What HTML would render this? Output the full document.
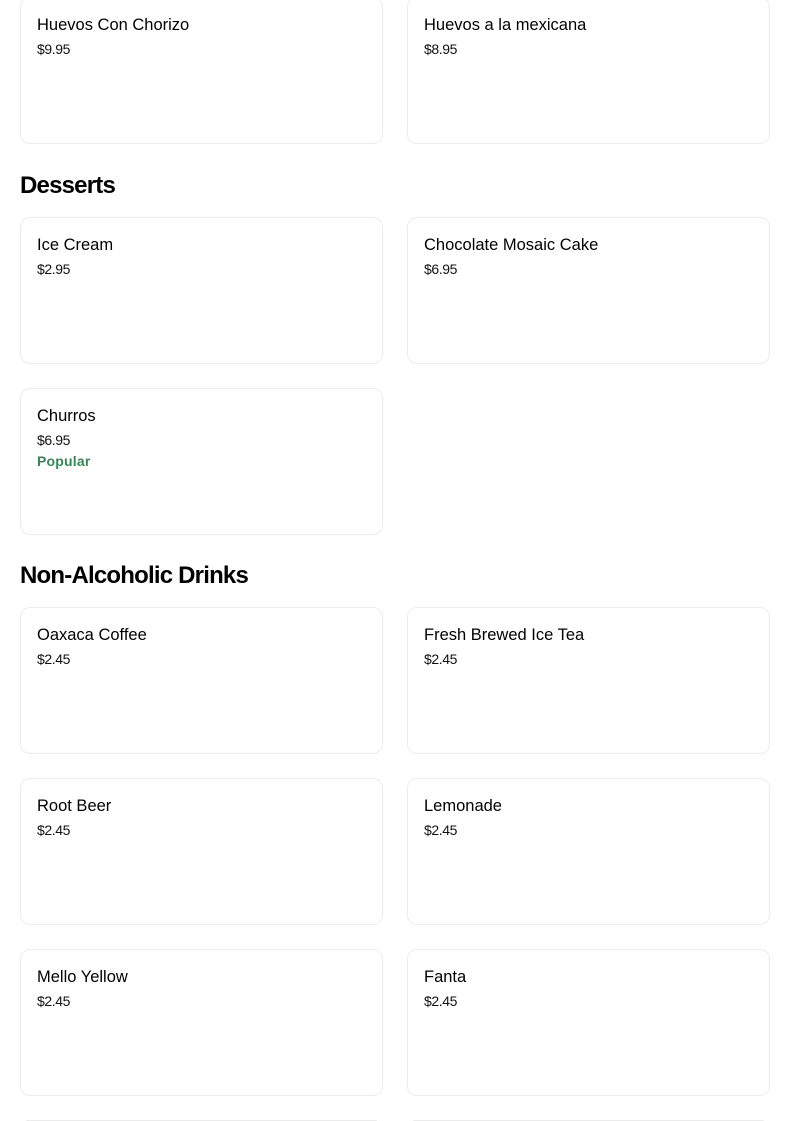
<!DOCTYPE html>
<html><head><style>
html,body{margin:0;width:804px;height:1121px;overflow:hidden}
body{background:#fff;font-family:"Liberation Sans",sans-serif;color:#000;position:relative}
.c{position:absolute;width:361px;height:145px;border:1px solid #ececec;border-radius:10px;box-sizing:content-box}
.n{position:absolute;left:16px;top:16px;font-size:16.5px;line-height:22px}
.p{position:absolute;left:16px;top:42px;font-size:14px;line-height:18px;letter-spacing:-0.4px;color:#111}
.g{position:absolute;left:16px;top:63px;font-size:14px;line-height:18px;color:#2f8a55;font-weight:bold;letter-spacing:0.2px}
h2{position:absolute;left:20px;margin:0;font-size:24px;line-height:30px;font-weight:bold;letter-spacing:-0.8px}
.b{position:absolute;width:361px;height:0;border-top:1px solid #ececec;border-radius:10px 10px 0 0;top:1120px}
</style></head><body>
<div class="c" style="left:20px;top:-3px"><div class="n">Huevos Con Chorizo</div><div class="p">$9.95</div></div>
<div class="c" style="left:407px;top:-3px"><div class="n">Huevos a la mexicana</div><div class="p">$8.95</div></div>
<h2 style="top:171px">Desserts</h2>
<div class="c" style="left:20px;top:217px"><div class="n">Ice Cream</div><div class="p">$2.95</div></div>
<div class="c" style="left:407px;top:217px"><div class="n">Chocolate Mosaic Cake</div><div class="p">$6.95</div></div>
<div class="c" style="left:20px;top:388px"><div class="n">Churros</div><div class="p">$6.95</div><div class="g">Popular</div></div>
<h2 style="top:561px">Non-Alcoholic Drinks</h2>
<div class="c" style="left:20px;top:607px"><div class="n">Oaxaca Coffee</div><div class="p">$2.45</div></div>
<div class="c" style="left:407px;top:607px"><div class="n">Fresh Brewed Ice Tea</div><div class="p">$2.45</div></div>
<div class="c" style="left:20px;top:778px"><div class="n">Root Beer</div><div class="p">$2.45</div></div>
<div class="c" style="left:407px;top:778px"><div class="n">Lemonade</div><div class="p">$2.45</div></div>
<div class="c" style="left:20px;top:949px"><div class="n">Mello Yellow</div><div class="p">$2.45</div></div>
<div class="c" style="left:407px;top:949px"><div class="n">Fanta</div><div class="p">$2.45</div></div>
<div class="b" style="left:26px;width:351px"></div>
<div class="b" style="left:413px;width:351px"></div>
</body></html>
